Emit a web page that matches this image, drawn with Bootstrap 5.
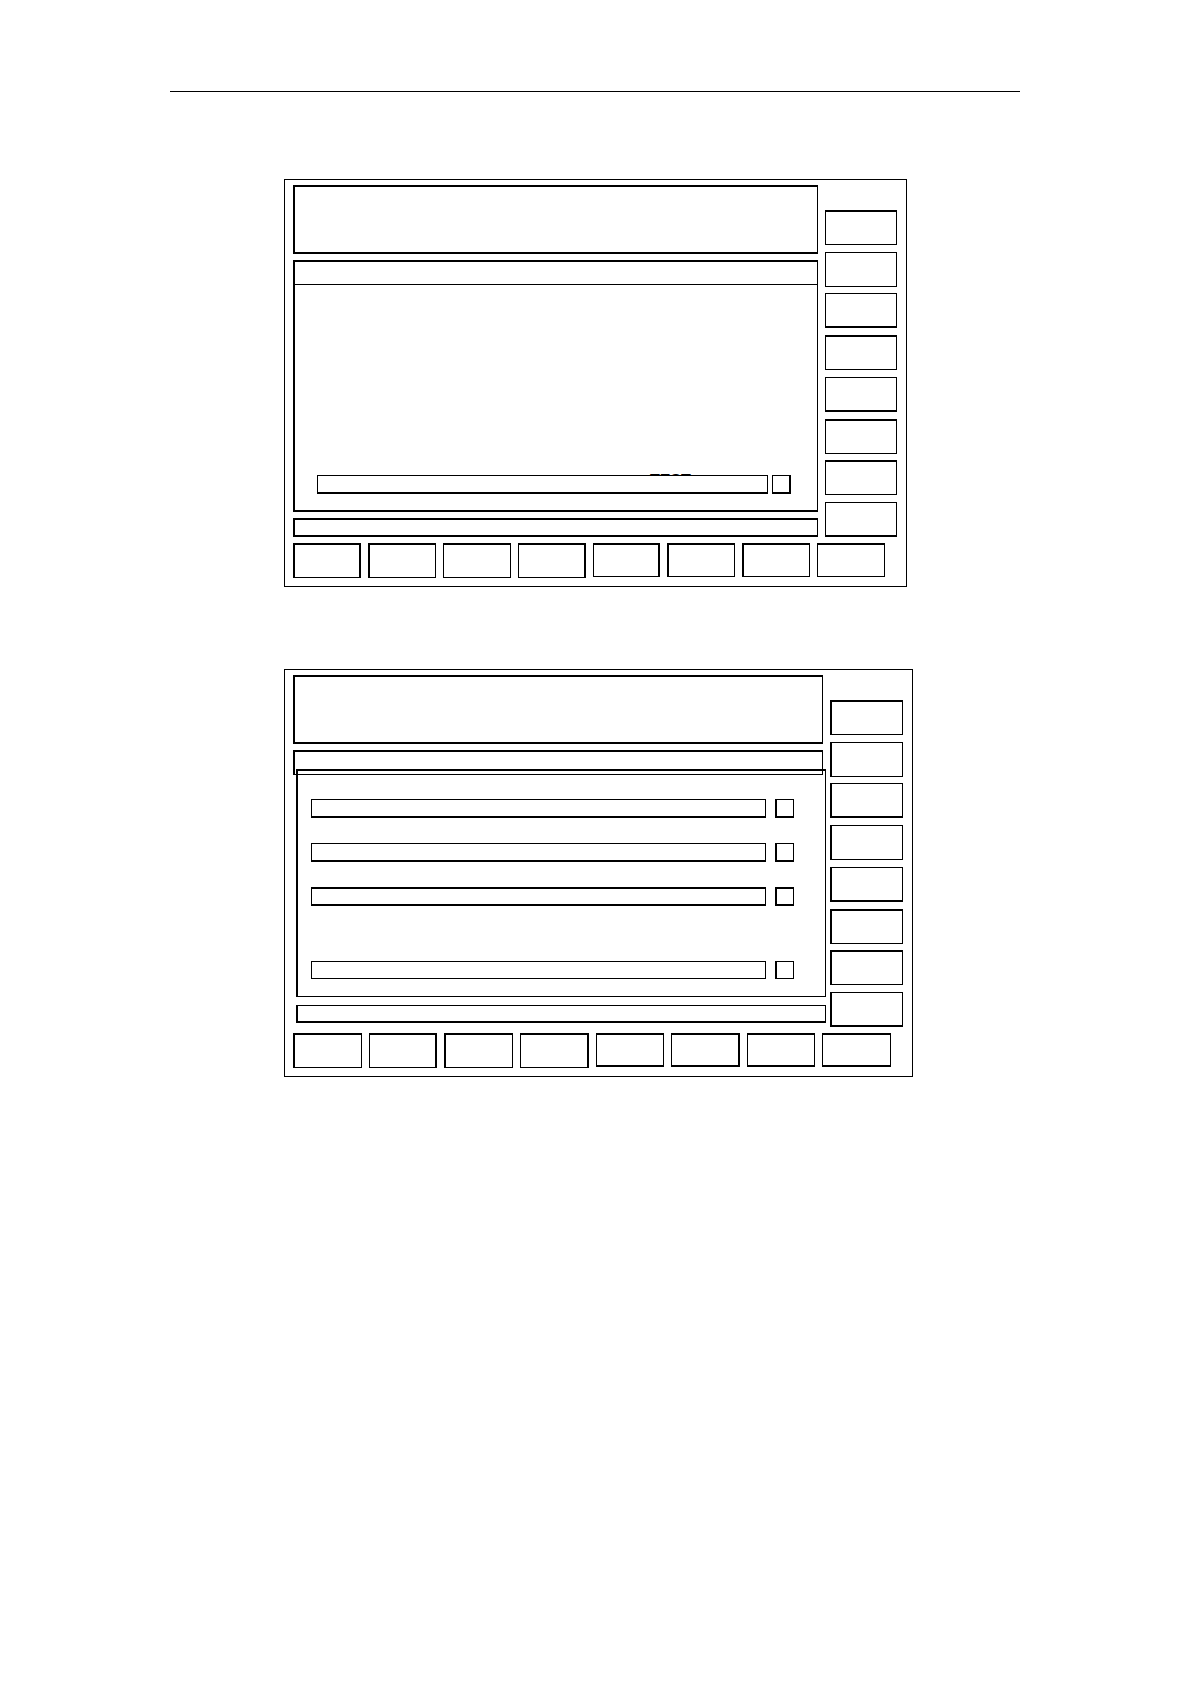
<!DOCTYPE html>
<html lang="en">
<head>
<meta charset="utf-8">
<meta name="viewport" content="width=device-width, initial-scale=1">
<title>Operator panels</title>
<link href="https://cdn.jsdelivr.net/npm/bootstrap@5.3.0/dist/css/bootstrap.min.css" rel="stylesheet">
<style>
body{background:#fff;color:#000;font-family:"Liberation Sans",sans-serif}
.sheet{max-width:850px;padding-top:91px}
.sheet-rule{border-bottom:1px solid #000;margin-bottom:87px}
.screen{border:1px solid #000;padding:5px 9px 8px 8px;margin-left:114px}
.screen-a{max-width:623px;margin-bottom:82px}
.screen-b{max-width:629px}
.screen-top{gap:7px;margin-bottom:6px}
.line-box{border:solid #000;border-width:2px 1px 2px 2px}
.header-box{height:69px;margin-bottom:6px}
.work-a{height:252px;margin-bottom:6px}
.title-a{height:23px;border-bottom:1px solid #000}
.status-a{height:19px}
.title-b{height:25px;border-bottom-width:1px}
.work-b{height:228px;margin:-6px -3px 8px 3px;border-bottom-width:1px;padding:28px 31px 0 13px}
.status-b{height:18px;margin:0 -3px 4px 3px;border-top-width:1px}
.side-keys{padding-top:25px}
.screen-a .side-keys{width:72px}
.screen-b .side-keys{width:73px}
.soft-keys{grid-template-columns:repeat(8,minmax(0,1fr));gap:7px;padding-right:12px}
.soft-keys .key{border-top-width:2px}
.key{height:35px;padding:0;background:#fff;border:1px solid #000;border-radius:0}
.soft-keys .key-short{height:34px}
.screen-b .side-keys .key{border-left-width:2px}
.entry{height:19px;min-width:0;padding:0 4px;font-size:12px;border:1px solid #000;border-bottom-width:2px;border-radius:0;background:#fff;position:relative}
.pick{appearance:none;flex:none;width:19px;height:19px;margin:0;border:1px solid #000;border-bottom-width:2px;background:#fff}
.field-a{gap:4px;padding:0 26px 0 22px}
.field-b{gap:9px;margin-bottom:25px}
.field-last{margin-top:55px;margin-bottom:0}
.field-last .entry,.field-last .pick{height:18px;border-bottom-width:1px}
.test-label{font-size:16px;font-weight:700;line-height:20px;margin:186px 0 -16px 355px}
.key.thick-top,.entry.thick-top,.pick.thick-top{border-top-width:2px}
.key.thick-bottom{border-bottom-width:2px}
.key.thick-left,.pick.thick-left{border-left-width:2px}
.key.thick-right,.pick.thick-right{border-right-width:2px}
</style>
<script src="https://cdn.jsdelivr.net/npm/bootstrap@5.3.0/dist/js/bootstrap.bundle.min.js"></script>
</head>
<body>
<main class="sheet mx-auto">
  <div class="sheet-rule" role="separator"></div>

  <section class="screen screen-a" aria-label="Screen 1">
    <div class="screen-top d-flex">
      <div class="flex-grow-1">
        <div class="line-box header-box"></div>
        <div class="line-box work-a">
          <div class="title-a"></div>
          <label class="test-label d-block" for="test">TEST</label>
          <div class="field-a d-flex">
            <input class="entry flex-grow-1" id="test" type="text">
            <input class="pick thick-right position-relative" type="checkbox" aria-label="Select">
          </div>
        </div>
        <div class="line-box status-a" role="status"></div>
      </div>
      <div class="side-keys d-flex flex-column justify-content-between flex-shrink-0">
        <button type="button" class="key thick-top" aria-label="Side key 1"></button>
        <button type="button" class="key" aria-label="Side key 2"></button>
        <button type="button" class="key thick-bottom" aria-label="Side key 3"></button>
        <button type="button" class="key thick-top" aria-label="Side key 4"></button>
        <button type="button" class="key thick-bottom" aria-label="Side key 5"></button>
        <button type="button" class="key thick-top" aria-label="Side key 6"></button>
        <button type="button" class="key thick-top" aria-label="Side key 7"></button>
        <button type="button" class="key thick-bottom" aria-label="Side key 8"></button>
      </div>
    </div>
    <div class="soft-keys d-grid">
      <button type="button" class="key thick-left thick-right" aria-label="Soft key 1"></button>
      <button type="button" class="key thick-left" aria-label="Soft key 2"></button>
      <button type="button" class="key" aria-label="Soft key 3"></button>
      <button type="button" class="key thick-right" aria-label="Soft key 4"></button>
      <button type="button" class="key key-short thick-right" aria-label="Soft key 5"></button>
      <button type="button" class="key key-short thick-left" aria-label="Soft key 6"></button>
      <button type="button" class="key key-short thick-left" aria-label="Soft key 7"></button>
      <button type="button" class="key key-short" aria-label="Soft key 8"></button>
    </div>
  </section>

  <section class="screen screen-b" aria-label="Screen 2">
    <div class="screen-top d-flex">
      <div class="flex-grow-1">
        <div class="line-box header-box"></div>
        <div class="line-box title-b"></div>
        <div class="line-box work-b">
          <div class="field-b d-flex">
            <input class="entry flex-grow-1" type="text" aria-label="Entry 1">
            <input class="pick thick-left" type="checkbox" aria-label="Select 1">
          </div>
          <div class="field-b d-flex">
            <input class="entry flex-grow-1" type="text" aria-label="Entry 2">
            <input class="pick thick-left" type="checkbox" aria-label="Select 2">
          </div>
          <div class="field-b d-flex">
            <input class="entry thick-top flex-grow-1" type="text" aria-label="Entry 3">
            <input class="pick thick-left thick-top" type="checkbox" aria-label="Select 3">
          </div>
          <div class="field-b field-last d-flex">
            <input class="entry flex-grow-1" type="text" aria-label="Entry 4">
            <input class="pick thick-left" type="checkbox" aria-label="Select 4">
          </div>
        </div>
        <div class="line-box status-b" role="status"></div>
      </div>
      <div class="side-keys d-flex flex-column justify-content-between flex-shrink-0">
        <button type="button" class="key thick-top" aria-label="Side key 1"></button>
        <button type="button" class="key" aria-label="Side key 2"></button>
        <button type="button" class="key thick-bottom" aria-label="Side key 3"></button>
        <button type="button" class="key" aria-label="Side key 4"></button>
        <button type="button" class="key thick-bottom" aria-label="Side key 5"></button>
        <button type="button" class="key thick-top" aria-label="Side key 6"></button>
        <button type="button" class="key thick-top" aria-label="Side key 7"></button>
        <button type="button" class="key thick-bottom" aria-label="Side key 8"></button>
      </div>
    </div>
    <div class="soft-keys d-grid">
      <button type="button" class="key thick-left" aria-label="Soft key 1"></button>
      <button type="button" class="key thick-right" aria-label="Soft key 2"></button>
      <button type="button" class="key thick-left" aria-label="Soft key 3"></button>
      <button type="button" class="key thick-right" aria-label="Soft key 4"></button>
      <button type="button" class="key key-short thick-bottom" aria-label="Soft key 5"></button>
      <button type="button" class="key key-short thick-bottom thick-right" aria-label="Soft key 6"></button>
      <button type="button" class="key key-short thick-bottom" aria-label="Soft key 7"></button>
      <button type="button" class="key key-short thick-bottom" aria-label="Soft key 8"></button>
    </div>
  </section>
</main>
</body>
</html>
